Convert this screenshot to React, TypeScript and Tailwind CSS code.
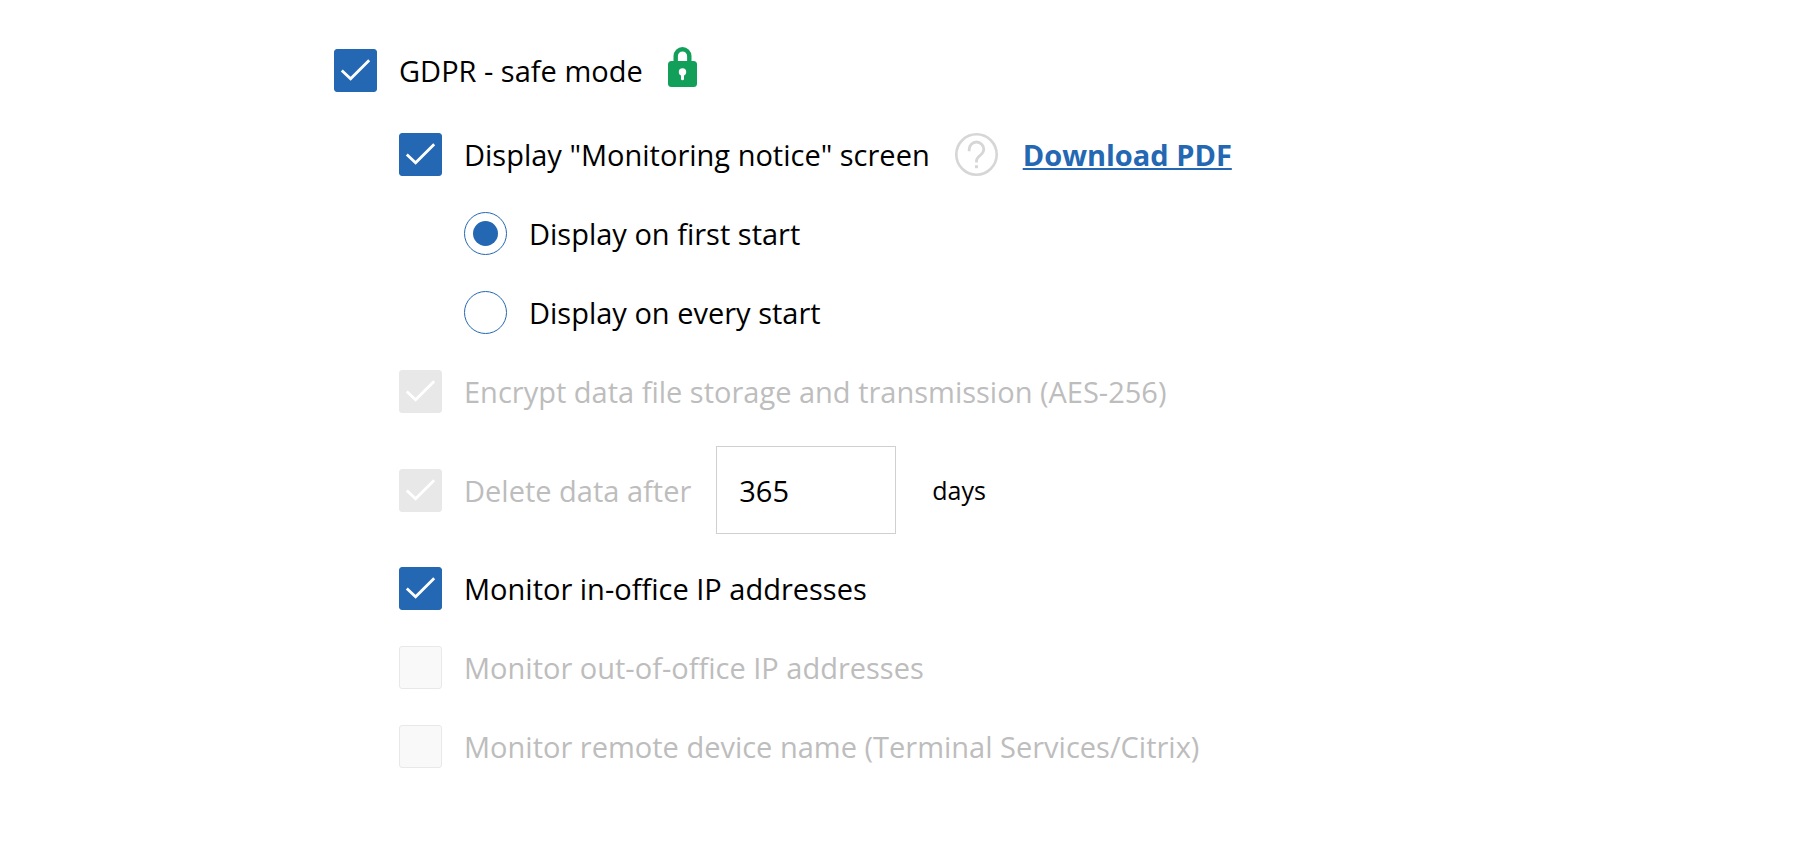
import { useState } from "react";
import type { ReactNode } from "react";
import clsx from "clsx";

type CheckboxProps = {
  id: string;
  label: string;
  checked: boolean;
  disabled?: boolean;
  onChange?: (checked: boolean) => void;
  children?: ReactNode;
};

function CheckboxRow({ id, label, checked, disabled, onChange, children }: CheckboxProps) {
  return (
    <div className="flex items-center gap-[25px]">
      <div className="flex items-center gap-[22px]">
        <span className="grid size-[43px] shrink-0">
          <input
            id={id}
            type="checkbox"
            checked={checked}
            disabled={disabled}
            onChange={(e) => onChange?.(e.target.checked)}
            className="peer col-start-1 row-start-1 size-full appearance-none rounded-[3px] border border-[#2467b3] bg-white checked:bg-[#2467b3] disabled:border-[#e8e8e8] disabled:bg-[#f9f9f9] disabled:checked:bg-[#e8e8e8]"
          />
          <svg
            viewBox="0 0 43 43"
            fill="none"
            stroke="white"
            strokeWidth="2.8"
            className="pointer-events-none invisible col-start-1 row-start-1 size-full peer-checked:visible"
            aria-hidden="true"
          >
            <path d="M7.8 21.5 16.6 29.8 35.2 11.2" />
          </svg>
        </span>
        <label htmlFor={id} className={clsx(disabled && "text-[#bdbdbd]")}>
          {label}
        </label>
      </div>
      {children}
    </div>
  );
}

type RadioProps = {
  id: string;
  label: string;
  checked: boolean;
  onChange: () => void;
};

function RadioRow({ id, label, checked, onChange }: RadioProps) {
  return (
    <div className="flex items-center gap-[22px]">
      <span className="grid size-[43px] shrink-0 place-items-center">
        <input
          id={id}
          type="radio"
          name="notice-frequency"
          checked={checked}
          onChange={onChange}
          className="peer col-start-1 row-start-1 size-full appearance-none rounded-full border border-[#2467b3] bg-white"
        />
        <span className="pointer-events-none invisible col-start-1 row-start-1 size-[25px] rounded-full bg-[#2467b3] peer-checked:visible" />
      </span>
      <label htmlFor={id}>{label}</label>
    </div>
  );
}

function LockIcon() {
  return (
    <svg viewBox="0 0 29 40" className="mb-[7px] h-10 w-[29px] shrink-0" aria-hidden="true">
      <path d="M7.7 16V9a6.8 6.8 0 0 1 13.6 0V16" fill="none" stroke="#119f5a" strokeWidth="4.4" />
      <rect y="14" width="29" height="26" rx="3.5" fill="#119f5a" />
      <circle cx="14.5" cy="25" r="3.7" fill="white" />
      <path d="M14.5 26v5.8" stroke="white" strokeWidth="3" strokeLinecap="round" />
    </svg>
  );
}

function HelpIcon() {
  return (
    <svg viewBox="0 0 43 43" fill="none" stroke="#d6d6d6" className="size-[43px]" aria-hidden="true">
      <circle cx="21.5" cy="21.5" r="20.2" strokeWidth="2.6" />
      <path
        d="M14.2 18.2v-1.9a7.3 7.3 0 0 1 14.6 0c0 3-1.6 4.3-3.6 6-2.3 1.9-3.7 3.2-3.7 5.7v1.6"
        strokeWidth="2.8"
      />
      <path d="M21.5 32.2v3" strokeWidth="3" />
    </svg>
  );
}

export default function App() {
  const [safeMode, setSafeMode] = useState(true);
  const [showNotice, setShowNotice] = useState(true);
  const [frequency, setFrequency] = useState<"first" | "every">("first");
  const [days, setDays] = useState("365");
  const [inOffice, setInOffice] = useState(true);

  return (
    <main className="min-h-screen bg-white font-['Open_Sans',sans-serif] text-[29px] leading-[43px] text-black">
      <form className="mx-auto max-w-[1132px] pt-[47px] pb-[72px]">
        <CheckboxRow id="safe-mode" label="GDPR - safe mode" checked={safeMode} onChange={setSafeMode}>
          <LockIcon />
        </CheckboxRow>

        <div className="mt-[39px] flex flex-col gap-[33px] pl-[65px]">
          <div className="flex flex-col gap-9">
            <CheckboxRow
              id="show-notice"
              label={'Display "Monitoring notice" screen'}
              checked={showNotice}
              onChange={setShowNotice}
            >
              <button type="button" aria-label="Help" className="shrink-0">
                <HelpIcon />
              </button>
              <a
                href="#download"
                className="font-bold text-[#2467b3] underline decoration-2 underline-offset-2"
              >
                Download PDF
              </a>
            </CheckboxRow>

            <div className="flex flex-col gap-9 pl-[65px]">
              <RadioRow
                id="first-start"
                label="Display on first start"
                checked={frequency === "first"}
                onChange={() => setFrequency("first")}
              />
              <RadioRow
                id="every-start"
                label="Display on every start"
                checked={frequency === "every"}
                onChange={() => setFrequency("every")}
              />
            </div>

            <CheckboxRow
              id="encrypt"
              label="Encrypt data file storage and transmission (AES-256)"
              checked
              disabled
            />
          </div>

          <CheckboxRow id="delete-data" label="Delete data after" checked disabled>
            <div className="flex items-center gap-9">
              <input
                id="days"
                type="text"
                inputMode="numeric"
                value={days}
                onChange={(e) => setDays(e.target.value)}
                className="h-[88px] w-[180px] border border-[#d0d0d0] bg-white px-[22px]"
              />
              <label htmlFor="days" className="text-[25px]">
                days
              </label>
            </div>
          </CheckboxRow>

          <div className="flex flex-col gap-9">
            <CheckboxRow
              id="in-office"
              label="Monitor in-office IP addresses"
              checked={inOffice}
              onChange={setInOffice}
            />
            <CheckboxRow id="out-of-office" label="Monitor out-of-office IP addresses" checked={false} disabled />
            <CheckboxRow
              id="remote-device"
              label="Monitor remote device name (Terminal Services/Citrix)"
              checked={false}
              disabled
            />
          </div>
        </div>
      </form>
    </main>
  );
}
